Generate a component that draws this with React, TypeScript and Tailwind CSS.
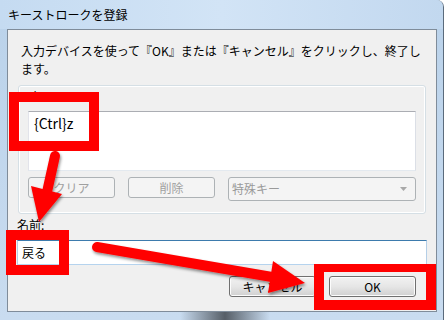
const font = { fontFamily: '"Noto Sans CJK JP", "Noto Sans", sans-serif' };

function WinButton({ label, disabled, className }: { label: string; disabled?: boolean; className?: string }) {
  return (
    <div
      className={
        'flex h-[21px] items-center justify-center rounded-[3px] border text-[12px] ' +
        (disabled
          ? 'border-[#adb2b5] bg-[#f4f4f4] text-[#a0a0a0] '
          : 'border-[#707070] bg-linear-to-b from-[#f2f2f2] via-[#e6e6e6] to-[#d0d0d0] text-black shadow-[inset_0_0_0_1px_#fcfcfc] ') +
        (className ?? '')
      }
    >
      {label}
    </div>
  );
}

function RedBox({ className }: { className: string }) {
  return <div className={'pointer-events-none absolute border-[#ff0000] ' + className} />;
}

function Arrows() {
  return (
    <svg className="pointer-events-none absolute inset-0" width={444} height={320} viewBox="0 0 444 320">
      <defs>
        <filter id="sh" x="-20%" y="-20%" width="140%" height="140%">
          <feDropShadow dx="1" dy="2" stdDeviation="1.5" floodColor="#000" floodOpacity="0.45" />
        </filter>
      </defs>
      <g filter="url(#sh)" fill="#ff0000" stroke="#ff0000">
        {/* down-left arrow to 名前 */}
        <line x1={55} y1={156} x2={47} y2={192} strokeWidth={10} strokeLinecap="round" />
        <polygon points="31,186 62,194 39,222" strokeWidth={0} />
        {/* arrow to OK */}
        <line x1={97} y1={247} x2={272} y2={277} strokeWidth={10} strokeLinecap="round" />
        <polygon points="273,261 268,293 305,283" strokeWidth={0} />
      </g>
    </svg>
  );
}

export default function App() {
  return (
    <div
      className="relative h-[320px] w-[444px] overflow-hidden rounded-tr-[7px] border-r border-[#5b6b7c] bg-linear-to-b from-[#bad2ea] to-[#c9dcf0] text-black"
      style={font}
    >
      {/* title bar */}
      <div className="flex h-[29px] items-center bg-linear-to-r from-[#c5dbf1] via-[#d2e4f6] to-[#c2d8ef] pl-[8px] text-[12px] text-black">
        キーストロークを登録
      </div>

      {/* client area */}
      <div className="ml-[7px] h-[283px] w-[430px] border border-[#7f8c9a] bg-[#f0f0f0]">
        <p className="px-[13px] pt-[12px] text-[12px] leading-[18px]">
          入力デバイスを使って『OK』または『キャンセル』をクリックし、終了します。
        </p>

        {/* key group */}
        <div className="mt-[7px] ml-[10px] h-[129px] w-[408px] rounded-[3px] border border-[#d5dfe5] px-[9px] pt-[1px] shadow-[inset_0_0_0_1px_#ffffff]">
          <div className="h-[18px] pl-[2px] text-[12px] leading-[18px]">キー:</div>
          <div className="mt-[6px] h-[60px] border border-t-[#abadb3] border-r-[#dbdfe6] border-b-[#e3e9ef] border-l-[#e2e3ea] bg-white px-[5px] pt-[2px] text-[14px] leading-[18px]">
            {'{Ctrl}z'}
          </div>
          <div className="mt-[6px] flex items-start gap-[13px]">
            <WinButton label="クリア" disabled className="w-[87px]" />
            <WinButton label="削除" disabled className="w-[87px]" />
            <div className="flex h-[24px] flex-1 items-center justify-between rounded-[3px] border border-[#adb2b5] bg-[#f4f4f4] pr-[8px] pl-[3px] text-[12px] text-[#9a9a9a]">
              <span>特殊キー</span>
              <svg width={7} height={4} viewBox="0 0 7 4">
                <polygon points="0,0 7,0 3.5,4" fill="#a8a8a8" />
              </svg>
            </div>
          </div>
        </div>

        {/* name */}
        <div className="mt-[2px] ml-[9px] h-[18px] text-[12px] leading-[18px]">名前:</div>
        <div className="mt-[6px] ml-[9px] flex h-[25px] w-[410px] items-center border border-t-[#3d7bad] border-r-[#b5cfe7] border-b-[#b5d3ee] border-l-[#b5cfe7] bg-white pl-[4px] text-[12px]">
          戻る
        </div>

        {/* dialog buttons */}
        <div className="mt-[11px] flex justify-end gap-[13px] pr-[20px]">
          <WinButton label="キャンセル" className="w-[87px]" />
          <WinButton label="OK" className="w-[87px]" />
        </div>
      </div>

      {/* bottom shade behind frame */}
      <div className="absolute bottom-0 left-[180px] h-[8px] w-[90px] bg-linear-to-r from-transparent via-[#3a3f45] to-transparent opacity-80" />

      {/* annotations */}
      <RedBox className="top-[92px] left-[9px] h-[59px] w-[90px] border-[10px]" />
      <RedBox className="top-[230px] left-[6px] h-[45px] w-[63px] border-[10px]" />
      <RedBox className="top-[264px] left-[314px] h-[46px] w-[122px] border-[10px] border-t-[8px]" />
      <Arrows />
    </div>
  );
}
